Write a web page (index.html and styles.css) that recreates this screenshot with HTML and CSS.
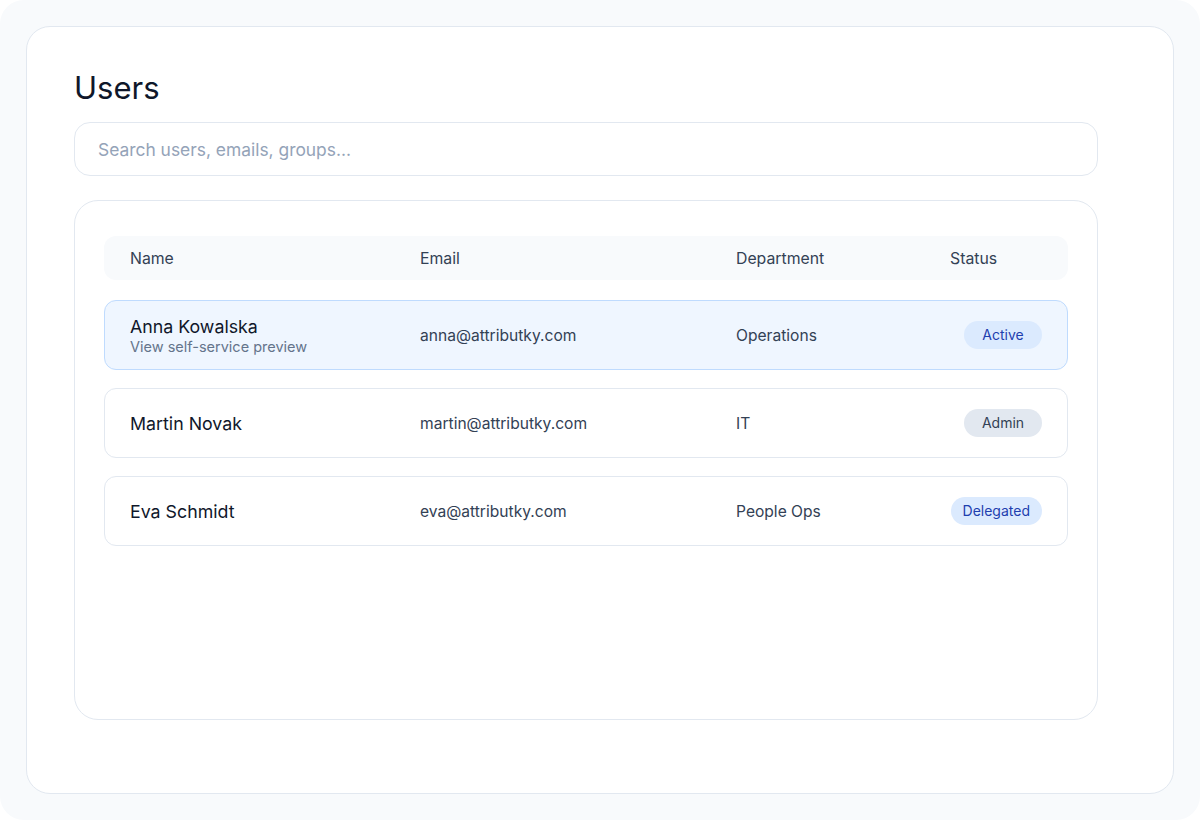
FILE: index.html
```html
<!DOCTYPE html>
<html lang="en">
<head>
  <meta charset="UTF-8" />
  <meta name="viewport" content="width=device-width, initial-scale=1.0"/>
  <title>Users</title>
  <link rel="stylesheet" href="styles.css">
</head>
<body>

  <div class="frame">
    <div class="panel">
      <h1 class="titulo">Users</h1>

      <!-- Busca -->
      <input type="text" class="busca" placeholder="Search users, emails, groups..." />

      <!-- Tabela -->
      <div class="tabela">
        <div class="cabecalho linha-grid">
          <div>Name</div>
          <div>Email</div>
          <div>Department</div>
          <div>Status</div>
        </div>

        <div class="lista">
          <div class="linha linha-grid ativa">
            <div class="nome">
              Anna Kowalska
              <span class="sub">View self-service preview</span>
            </div>
            <div>anna@attributky.com</div>
            <div>Operations</div>
            <div class="status"><span class="badge azul">Active</span></div>
          </div>

          <div class="linha linha-grid">
            <div class="nome">Martin Novak</div>
            <div>martin@attributky.com</div>
            <div>IT</div>
            <div class="status"><span class="badge cinza">Admin</span></div>
          </div>

          <div class="linha linha-grid">
            <div class="nome">Eva Schmidt</div>
            <div>eva@attributky.com</div>
            <div>People Ops</div>
            <div class="status"><span class="badge azul">Delegated</span></div>
          </div>
        </div>
      </div>
    </div>
  </div>

</body>
</html>
```

FILE: styles.css
```css
body {
  margin: 0;
  padding: 0;
  background: #ffffff;
  font-family: 'Inter', 'Noto Sans', sans-serif;
  color: #0f172a;
}

.frame {
  width: 1200px;
  height: 820px;
  box-sizing: border-box;
  padding: 26px;
  background: #f8fafc;
  border-radius: 24px;
}

.panel {
  height: 100%;
  box-sizing: border-box;
  padding: 41px 47px;
  background: white;
  border: 1px solid #e2e8f0;
  border-radius: 24px;
}

.titulo {
  margin: 0 0 14px 0;
  font-size: 31px;
  font-weight: 400;
  line-height: 40px;
  color: #0f172a;
}

.busca {
  display: block;
  width: 1024px;
  height: 54px;
  box-sizing: border-box;
  padding: 0 23px;
  border: 1px solid #e2e8f0;
  border-radius: 16px;
  font-family: inherit;
  font-size: 17.4px;
  color: #0f172a;
  outline: none;
  margin-bottom: 24px;
}

.busca::placeholder {
  color: #94a3b8;
}

/* TABELA */
.tabela {
  width: 1024px;
  height: 520px;
  box-sizing: border-box;
  padding: 35px 29px;
  border: 1px solid #e2e8f0;
  border-radius: 24px;
}

.linha-grid {
  display: grid;
  grid-template-columns: 290px 316px 214px 1fr;
  align-items: center;
  padding: 0 26px;
}

.cabecalho {
  height: 44px;
  background: #f8fafc;
  border-radius: 12px;
  font-size: 15.8px;
  color: #334155;
  margin-bottom: 20px;
}

.lista {
  display: flex;
  flex-direction: column;
  gap: 18px;
}

.linha {
  height: 70px;
  box-sizing: border-box;
  border: 1px solid #e2e8f0;
  border-radius: 12px;
  font-size: 15.6px;
  color: #334155;
  padding: 0 25px;
}

.linha.ativa {
  background: #eff6ff;
  border-color: #bfdbfe;
}

.nome {
  font-size: 17.8px;
  color: #0f172a;
}

.sub {
  display: block;
  font-size: 14.5px;
  color: #64748b;
  margin-top: 1px;
}

.status {
  display: flex;
  justify-content: flex-end;
}

.badge {
  min-width: 78px;
  box-sizing: border-box;
  padding: 0 12px;
  height: 28px;
  line-height: 28px;
  border-radius: 14px;
  text-align: center;
  font-size: 14px;
}

.badge.azul {
  background: #dbeafe;
  color: #1e40af;
}

.badge.cinza {
  background: #e2e8f0;
  color: #334155;
}
```
